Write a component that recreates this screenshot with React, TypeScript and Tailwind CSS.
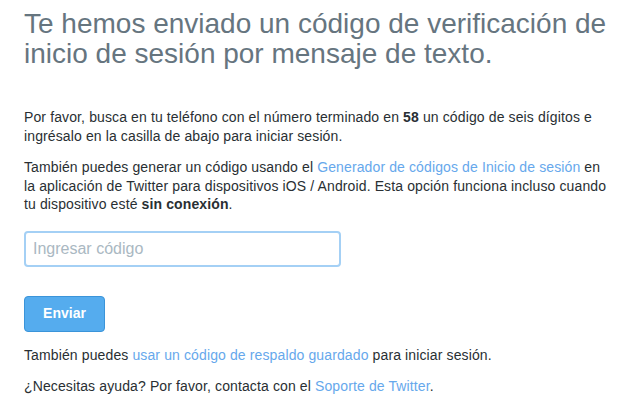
const LINK = "text-[#66a8ec]";

export default function App() {
  return (
    <div className="min-h-screen bg-white font-['Liberation_Sans',Arial,sans-serif] text-[#292f33]">
      <div className="pl-[24px] pr-[16px] pt-[9px]">
        <h1 className="text-[28px] leading-[30px] font-normal text-[#66757f]">
          Te hemos enviado un código de verificación de inicio de sesión por mensaje de texto.
        </h1>

        <div className="text-[14px] leading-[18.5px] tracking-[0.12px]">
          <p className="mt-[39px]">
            Por favor, busca en tu teléfono con el número terminado en <b>58</b> un código de seis dígitos e
            <br />
            ingrésalo en la casilla de abajo para iniciar sesión.
          </p>

          <p className="mt-[13px]">
            También puedes generar un código usando el{" "}
            <a className={LINK}>Generador de códigos de Inicio de sesión</a> en
            <br />
            la aplicación de Twitter para dispositivos iOS / Android. Esta opción funciona incluso cuando
            <br />
            tu dispositivo esté <b>sin conexión</b>.
          </p>
        </div>

        <input
          autoFocus
          placeholder="Ingresar código"
          className="mt-[17px] block w-[317px] h-[36px] rounded-[4px] border-2 border-[#a4d0f5] px-[7px] text-[16px] text-[#292f33] outline-none placeholder:text-[#aab8c2]"
        />

        <button className="mt-[29px] block w-[81px] h-[36px] rounded-[4px] border border-[#3b94d9] bg-[#55acee] text-[14px] font-bold text-white">
          Enviar
        </button>

        <div className="text-[14px] leading-[18.5px] tracking-[0.12px]">
          <p className="mt-[14px]">
            También puedes <a className={LINK}>usar un código de respaldo guardado</a> para iniciar sesión.
          </p>

          <p className="mt-[13px]">
            ¿Necesitas ayuda? Por favor, contacta con el <a className={LINK}>Soporte de Twitter</a>.
          </p>
        </div>
      </div>
    </div>
  );
}
